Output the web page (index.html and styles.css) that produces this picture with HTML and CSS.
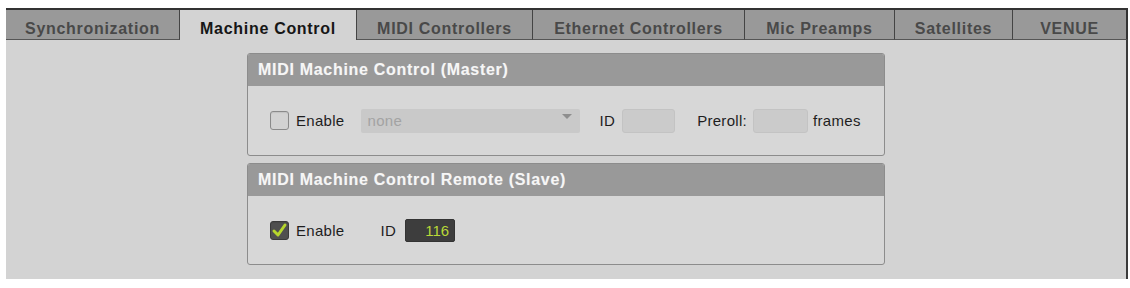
FILE: index.html
```html
<!DOCTYPE html>
<html>
<head>
<meta charset="utf-8">
<link rel="stylesheet" href="styles.css">
</head>
<body>
<div class="window">
  <div class="tabs">
    <div class="tab">Synchronization</div>
    <div class="tab active">Machine Control</div>
    <div class="tab">MIDI Controllers</div>
    <div class="tab">Ethernet Controllers</div>
    <div class="tab">Mic Preamps</div>
    <div class="tab">Satellites</div>
    <div class="tab last">VENUE</div>
  </div>
  <div class="content">
    <div class="panel">
      <div class="panel-head">MIDI Machine Control (Master)</div>
      <div class="panel-body row1">
        <span class="check"></span>
        <span class="label enable">Enable</span>
        <div class="select"><span>none</span><span class="arrow"></span></div>
        <span class="label id-label">ID</span>
        <span class="field field-id"></span>
        <span class="label preroll">Preroll:</span>
        <span class="field field-preroll"></span>
        <span class="label frames">frames</span>
      </div>
    </div>
    <div class="panel">
      <div class="panel-head">MIDI Machine Control Remote (Slave)</div>
      <div class="panel-body row2">
        <span class="check checked">
          <svg viewBox="0 0 19 19" width="19" height="19"><path d="M4 10 L8 14 L15 4" fill="none" stroke="#b6d62c" stroke-width="3" stroke-linecap="round" stroke-linejoin="round"/></svg>
        </span>
        <span class="label enable">Enable</span>
        <span class="label id-label2">ID</span>
        <span class="field dark">116</span>
      </div>
    </div>
  </div>
</div>
</body>
</html>
```

FILE: styles.css
```css
html, body {
  margin: 0;
  padding: 0;
  background: #ffffff;
}
body {
  font-family: "Liberation Sans", Arial, sans-serif;
}
.window {
  margin: 8px 0 0 6px;
  width: 1122px;
}
.tabs {
  display: flex;
  border-top: 2px solid #333333;
  height: 32px;
  box-sizing: border-box;
}
.tab {
  box-sizing: border-box;
  height: 30px;
  background: #999999;
  color: #494949;
  font-weight: bold;
  font-size: 16px;
  line-height: 18px;
  letter-spacing: 0.7px;
  display: flex;
  align-items: flex-end;
  justify-content: center;
  padding-bottom: 1px;
  border-right: 1px solid #444444;
  border-bottom: 1px solid #555555;
  flex: none;
}
.tab:nth-child(1) { width: 174px; }
.tab:nth-child(2) { width: 177px; }
.tab:nth-child(3) { width: 176px; }
.tab:nth-child(4) { width: 212px; }
.tab:nth-child(5) { width: 150px; }
.tab:nth-child(6) { width: 118px; }
.tab:nth-child(7) { width: 115px; border-right: 2px solid #333333; }
.tab.active {
  background: #d3d3d3;
  color: #161616;
  border-bottom: none;
  padding-bottom: 2px;
}
.content {
  background: #d3d3d3;
  height: 239px;
  box-sizing: border-box;
  border-right: 2px solid #3a3a3a;
  padding-top: 13px;
  display: flex;
  flex-direction: column;
  align-items: center;
  gap: 7px;
}
.panel {
  width: 638px;
  box-sizing: border-box;
  border: 1px solid #8c8c8c;
  border-radius: 3px;
  background: #d7d7d7;
  overflow: hidden;
}
.panel-head {
  height: 32px;
  background: #999999;
  color: #f6f6f6;
  font-weight: bold;
  font-size: 16px;
  letter-spacing: 0.7px;
  display: flex;
  align-items: center;
  padding-left: 10px;
  text-shadow: 0 0 1px rgba(255,255,255,0.3);
}
.panel-body {
  display: flex;
  align-items: center;
  padding-left: 22px;
  box-sizing: border-box;
}
.row1 { height: 69px; }
.row2 { height: 68px; }
.check {
  width: 19px;
  height: 19px;
  box-sizing: border-box;
  border: 1px solid #8a8a8a;
  border-radius: 3px;
  background: #d2d2d2;
  box-shadow: inset 0 1px 1px rgba(0,0,0,0.08);
  display: block;
  flex: none;
}
.check svg { display: block; margin: -1px 0 0 -1px; }
.check.checked {
  background: #4f4f4f;
  border-color: #3a3a3a;
}
.label {
  font-size: 15px;
  letter-spacing: 0.3px;
  color: #1e1e1e;
}
.enable { margin-left: 7px; }
.select {
  margin-left: 16px;
  width: 219px;
  height: 24px;
  background: #c9c9c9;
  border-radius: 2px;
  display: flex;
  align-items: center;
  justify-content: space-between;
  padding: 0 8px 0 7px;
  box-sizing: border-box;
  color: #a3a3a3;
  font-size: 15px;
  letter-spacing: 0.3px;
}
.arrow {
  width: 0;
  height: 0;
  border-left: 5px solid transparent;
  border-right: 5px solid transparent;
  border-top: 5px solid #8e8e8e;
  margin-top: -8px;
}
.id-label { margin-left: 20px; }
.field {
  height: 24px;
  box-sizing: border-box;
  border: 1px solid #c3c3c3;
  border-radius: 3px;
  background: #cbcbcb;
  display: block;
}
.field-id { width: 53px; margin-left: 7px; }
.preroll { margin-left: 22px; }
.field-preroll { width: 55px; margin-left: 6px; }
.frames { margin-left: 5px; }
.id-label2 { margin-left: 36px; }
.field.dark {
  width: 50px;
  height: 23px;
  margin-left: 9px;
  background: #3d3d3d;
  border-color: #333333;
  border-radius: 2px;
  color: #b9d838;
  font-size: 15px;
  text-align: right;
  padding-right: 5px;
  line-height: 21px;
}
```
